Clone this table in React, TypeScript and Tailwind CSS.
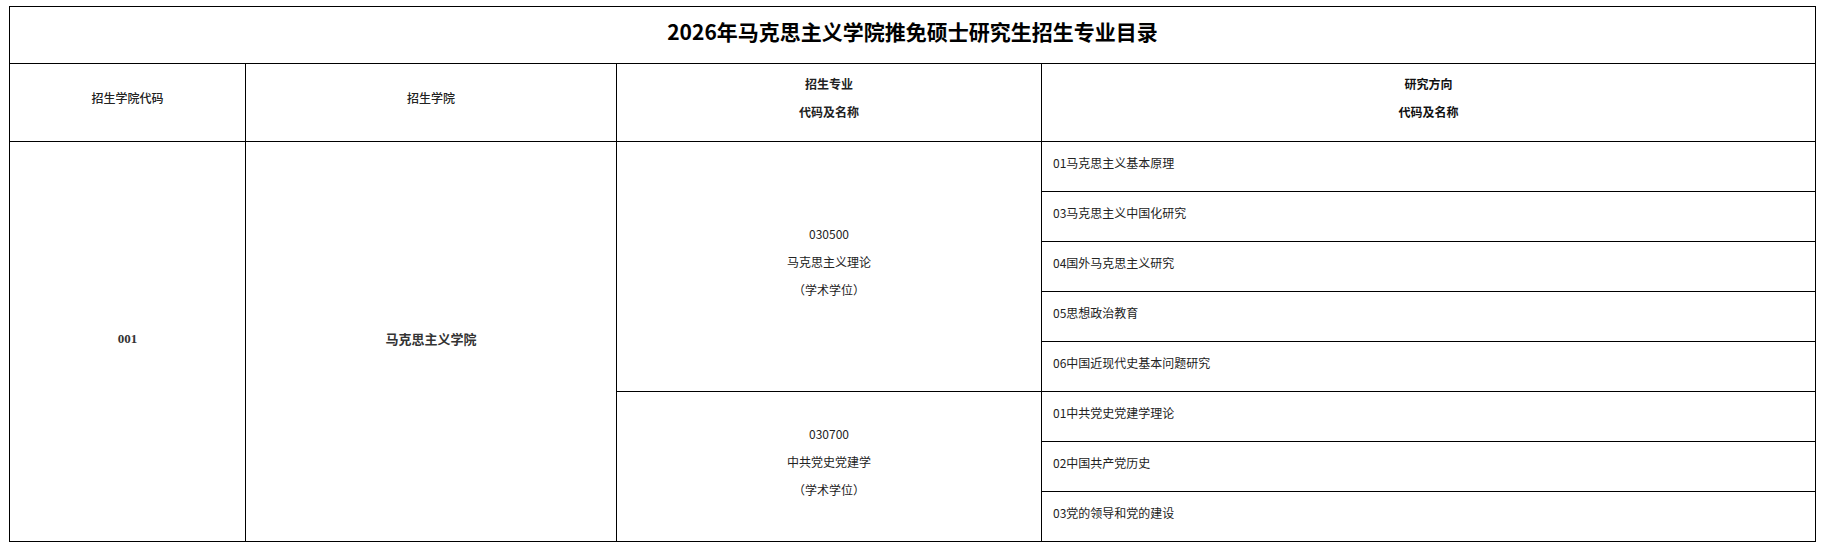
import React from "react";

const researchA = [
  "01马克思主义基本原理",
  "03马克思主义中国化研究",
  "04国外马克思主义研究",
  "05思想政治教育",
  "06中国近现代史基本问题研究",
];
const researchB = ["01中共党史党建学理论", "02中国共产党历史", "03党的领导和党的建设"];

function Major({ code, name, rows }: { code: string; name: string; rows: number }) {
  return (
    <td
      rowSpan={rows}
      className="border border-black text-center align-middle text-[12px] text-[#222] leading-[28px]"
    >
      <div className="pb-[9px]">
        <div>{code}</div>
        <div>{name}</div>
        <div>（学术学位）</div>
      </div>
    </td>
  );
}

function Research({ text }: { text: string }) {
  return (
    <td className="border border-black align-top pl-[11px] pt-[13px] text-[12px] leading-[16px] text-[#222]">
      {text}
    </td>
  );
}

export default function App() {
  return (
    <div className="bg-white w-[1825px] h-[544px] pl-[9px] pt-[6px] font-['Noto_Sans_CJK_SC',sans-serif]">
      <table className="table-fixed border-collapse w-[1807px]">
        <colgroup>
          <col className="w-[236px]" />
          <col className="w-[371px]" />
          <col className="w-[425px]" />
          <col />
        </colgroup>
        <tbody>
          <tr className="h-[57px]">
            <td colSpan={4} className="border border-black text-center align-middle text-[21px] font-bold text-black">
              <div className="pb-[6px]">2026年马克思主义学院推免硕士研究生招生专业目录</div>
            </td>
          </tr>
          <tr className="h-[78px]">
            <td className="border border-black text-center align-middle text-[12px] font-medium text-[#222]">
              <div className="pb-[9px]">招生学院代码</div>
            </td>
            <td className="border border-black text-center align-middle text-[12px] font-medium text-[#222]">
              <div className="pb-[9px]">招生学院</div>
            </td>
            <td className="border border-black text-center align-middle text-[12px] font-semibold text-[#222] leading-[28px]">
              <div className="pb-[9px]">
                <div>招生专业</div>
                <div>代码及名称</div>
              </div>
            </td>
            <td className="border border-black text-center align-middle text-[12px] font-bold text-[#111] leading-[28px]">
              <div className="pb-[9px]">
                <div>研究方向</div>
                <div>代码及名称</div>
              </div>
            </td>
          </tr>
          <tr className="h-[50px]">
            <td
              rowSpan={8}
              className="border border-black text-center align-middle text-[13px] font-bold text-[#333] font-['Liberation_Serif',serif]"
            >
              <div className="pb-[6px]">001</div>
            </td>
            <td rowSpan={8} className="border border-black text-center align-middle text-[13px] font-bold text-[#333]">
              <div className="pb-[6px]">马克思主义学院</div>
            </td>
            <Major code="030500" name="马克思主义理论" rows={5} />
            <Research text={researchA[0]} />
          </tr>
          {researchA.slice(1).map((t) => (
            <tr key={t} className="h-[50px]">
              <Research text={t} />
            </tr>
          ))}
          <tr className="h-[50px]">
            <Major code="030700" name="中共党史党建学" rows={3} />
            <Research text={researchB[0]} />
          </tr>
          {researchB.slice(1).map((t) => (
            <tr key={t} className="h-[50px]">
              <Research text={t} />
            </tr>
          ))}
        </tbody>
      </table>
    </div>
  );
}
